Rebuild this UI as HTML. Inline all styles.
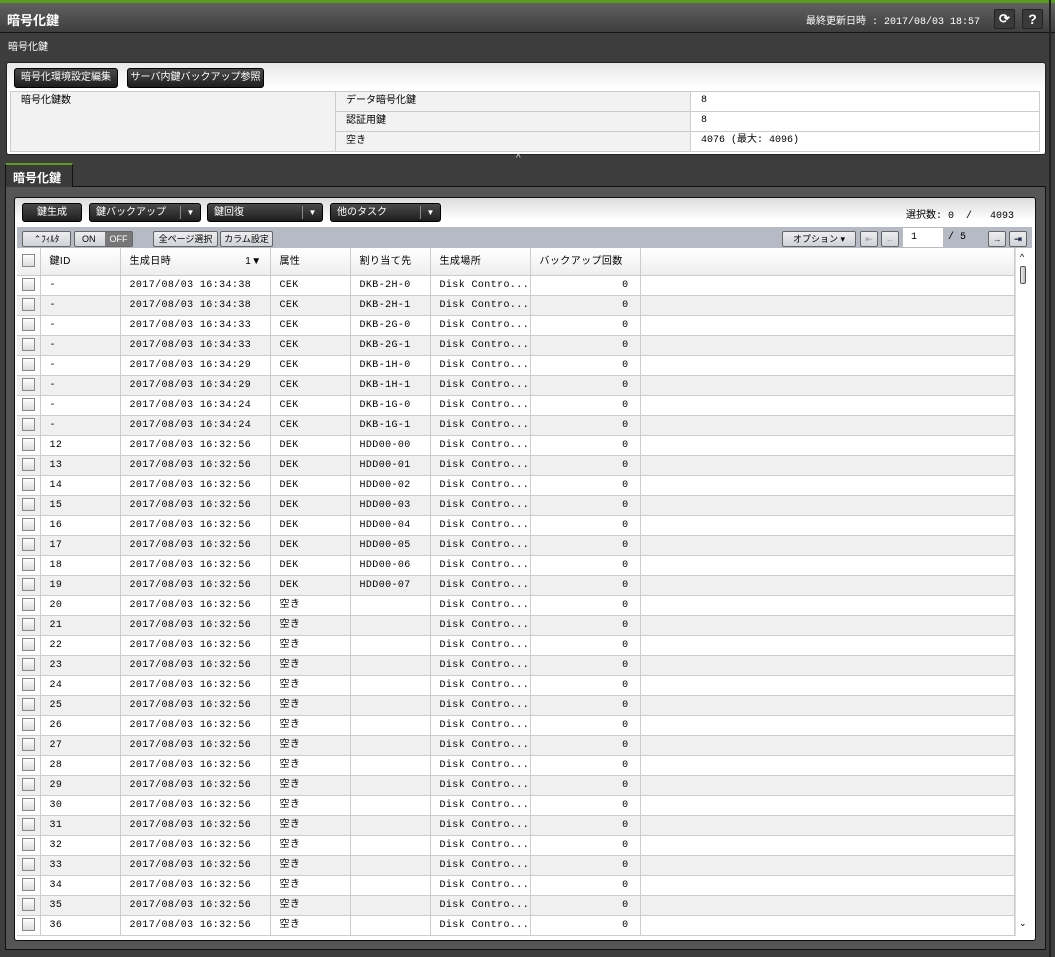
<!DOCTYPE html>
<html><head><meta charset="utf-8"><style>
*{box-sizing:border-box;margin:0;padding:0}
body{width:1055px;height:957px;background:#3d3d3d;font-family:"Liberation Sans","Noto Sans CJK JP",sans-serif;font-size:10px;color:#000;position:relative;overflow:hidden}
.abs{position:absolute}
.top{left:0;top:0;width:1055px;height:33px;background:linear-gradient(#606060,#3e3e3e);border-top:3px solid #5a9a1e;border-bottom:1px solid #151515}
.btn{position:absolute;background:linear-gradient(#4a4a4a,#1e1e1e);color:#fff;border:1px solid #000;border-radius:3px;font-size:10px;text-align:center;line-height:17px}
.dd{position:absolute;background:linear-gradient(#4a4a4a,#1e1e1e);color:#fff;border:1px solid #000;border-radius:3px;font-size:10px;line-height:17px;padding-left:6px}
.dd i{position:absolute;right:0;top:2px;width:20px;height:13px;border-left:1px solid #888;font-style:normal;text-align:center;line-height:13px;font-size:8px}
table{border-collapse:collapse;table-layout:fixed}
.info td{border:1px solid #ccc;height:20px;vertical-align:top;padding:0 10px;line-height:18px;font-size:10px;overflow:hidden}
.g td{font-family:"Liberation Mono","Noto Sans CJK JP",monospace;font-size:10px;letter-spacing:0.4px;height:20px;line-height:19px;border-bottom:1px solid #ccc;border-right:1px solid #ccc;padding:0 0 0 9px;white-space:nowrap;overflow:hidden;vertical-align:middle}
.g tr:nth-child(even) td{background:#f0f0f0}
.g td.n{text-align:right;padding-right:11px}
.cb{display:inline-block;width:13px;height:13px;border:1px solid #888;background:linear-gradient(#fff,#ddd);vertical-align:middle;margin-left:-4px}
.fb{position:absolute;border:1px solid #666;border-radius:2px;background:linear-gradient(#eee,#cfd2d8);font-size:9px;line-height:14px;text-align:center;top:231px;height:16px;white-space:nowrap;overflow:hidden}
</style></head><body>
<div class="abs top"></div>
<div class="abs" style="left:7px;top:10px;color:#fff;font-weight:bold;font-size:13px">暗号化鍵</div>
<div class="abs" style="left:806px;top:12px;color:#fff;font-size:10px;font-family:'Liberation Mono','Noto Sans CJK JP',monospace">最終更新日時 : 2017/08/03 18:57</div>
<div class="abs" style="left:994px;top:9px;width:21px;height:20px;border:1px solid #222;border-radius:2px;background:#3a3a3a;color:#fff;text-align:center;font-weight:bold;font-size:13px;line-height:18px">⟳</div>
<div class="abs" style="left:1022px;top:9px;width:21px;height:20px;border:1px solid #222;border-radius:2px;background:#3a3a3a;color:#fff;text-align:center;font-weight:bold;font-size:14px;line-height:18px">?</div>
<div class="abs" style="left:8px;top:38px;color:#fff;font-size:10px">暗号化鍵</div>

<div class="abs" style="left:6px;top:62px;width:1040px;height:93px;border:1px solid #222;border-radius:3px;background:linear-gradient(#e8e8e8,#fff 25px)"></div>
<div class="btn" style="left:14px;top:68px;width:104px;height:20px">暗号化環境設定編集</div>
<div class="btn" style="left:127px;top:68px;width:137px;height:20px">サーバ内鍵バックアップ参照</div>
<table class="info abs" style="left:10px;top:91px;width:1030px">
<tr><td rowspan="3" style="width:325px;background:#f2f2f2">暗号化鍵数</td><td style="width:355px;background:#f2f2f2">データ暗号化鍵</td><td style="font-family:'Liberation Mono',monospace">8</td></tr>
<tr><td style="background:#f2f2f2">認証用鍵</td><td style="font-family:'Liberation Mono',monospace">8</td></tr>
<tr><td style="background:#f2f2f2">空き</td><td style="font-family:'Liberation Mono','Noto Sans CJK JP',monospace">4076 (最大: 4096)</td></tr>
</table>
<div class="abs" style="left:516px;top:153px;color:#ddd;font-size:10px">^</div>

<div class="abs" style="left:5px;top:163px;width:68px;height:24px;background:#3a3a3a;border:1px solid #111;border-top:2px solid #5a9a1e;border-bottom:none;color:#fff;font-weight:bold;font-size:12px;padding:4px 0 0 7px;z-index:2">暗号化鍵</div>
<div class="abs" style="left:5px;top:186px;width:1041px;height:764px;background:#555;border:1px solid #111"></div>
<div class="abs" style="left:1049px;top:0;width:2px;height:957px;background:#222"></div>
<div class="abs" style="left:14px;top:197px;width:1022px;height:744px;background:linear-gradient(#dcdcdc,#fff 22px);border:1px solid #111;border-radius:3px"></div>

<div class="btn" style="left:22px;top:203px;width:60px;height:19px">鍵生成</div>
<div class="dd" style="left:89px;top:203px;width:112px;height:19px">鍵バックアップ<i>▼</i></div>
<div class="dd" style="left:207px;top:203px;width:116px;height:19px">鍵回復<i>▼</i></div>
<div class="dd" style="left:330px;top:203px;width:111px;height:19px">他のタスク<i>▼</i></div>
<div class="abs" style="left:906px;top:206px;font-size:10px;font-family:'Liberation Mono','Noto Sans CJK JP',monospace;white-space:pre">選択数: 0  /   4093</div>

<div class="abs" style="left:17px;top:227px;width:1015px;height:21px;background:#b6bac4"></div>
<div class="fb" style="left:22px;width:49px">⌃ﾌｨﾙﾀ</div>
<div class="fb" style="left:74px;width:59px;text-align:left;padding-left:7px">ON <span style="position:absolute;right:0;top:0;width:27px;height:14px;background:#777;color:#fff;text-align:center">OFF</span></div>
<div class="fb" style="left:153px;width:65px">全ページ選択</div>
<div class="fb" style="left:220px;width:53px">カラム設定</div>
<div class="fb" style="left:782px;width:74px">オプション ▾</div>
<div class="fb" style="left:860px;width:18px;color:#999">⇤</div>
<div class="fb" style="left:881px;width:18px;color:#999">←</div>
<div class="abs" style="left:903px;top:228px;width:40px;height:19px;background:#fff;font-family:'Liberation Mono',monospace;padding:4px 0 0 8px">1</div>
<div class="abs" style="left:948px;top:232px;font-family:'Liberation Mono',monospace">/ 5</div>
<div class="fb" style="left:988px;width:18px;font-weight:bold;color:#124">→</div>
<div class="fb" style="left:1009px;width:18px;font-weight:bold;color:#124">⇥</div>

<div class="abs" style="left:17px;top:248px;width:1015px;height:688px;background:#fff;overflow:hidden">
<table class="g" style="width:998px">
<tr style="height:27px"><td style="width:23px;height:27px;background:linear-gradient(#fff,#eee)"><span class="cb"></span></td><td style="width:80px;background:linear-gradient(#fff,#eee);font-family:'Liberation Sans','Noto Sans CJK JP',sans-serif">鍵ID</td><td style="width:150px;background:linear-gradient(#fff,#eee);font-family:'Liberation Sans','Noto Sans CJK JP',sans-serif">生成日時<span style="float:right;margin-right:8px">1▼</span></td><td style="width:80px;background:linear-gradient(#fff,#eee);font-family:'Liberation Sans','Noto Sans CJK JP',sans-serif">属性</td><td style="width:80px;background:linear-gradient(#fff,#eee);font-family:'Liberation Sans','Noto Sans CJK JP',sans-serif">割り当て先</td><td style="width:100px;background:linear-gradient(#fff,#eee);font-family:'Liberation Sans','Noto Sans CJK JP',sans-serif">生成場所</td><td style="width:110px;background:linear-gradient(#fff,#eee);font-family:'Liberation Sans','Noto Sans CJK JP',sans-serif">バックアップ回数</td><td style="background:linear-gradient(#fff,#eee)"></td></tr>
</table>
<table class="g" style="width:998px">
<colgroup><col style="width:23px"><col style="width:80px"><col style="width:150px"><col style="width:80px"><col style="width:80px"><col style="width:100px"><col style="width:110px"><col></colgroup>
<tr><td><span class="cb"></span></td><td>-</td><td>2017/08/03 16:34:38</td><td>CEK</td><td>DKB-2H-0</td><td>Disk Contro...</td><td class="n">0</td><td></td></tr>
<tr><td><span class="cb"></span></td><td>-</td><td>2017/08/03 16:34:38</td><td>CEK</td><td>DKB-2H-1</td><td>Disk Contro...</td><td class="n">0</td><td></td></tr>
<tr><td><span class="cb"></span></td><td>-</td><td>2017/08/03 16:34:33</td><td>CEK</td><td>DKB-2G-0</td><td>Disk Contro...</td><td class="n">0</td><td></td></tr>
<tr><td><span class="cb"></span></td><td>-</td><td>2017/08/03 16:34:33</td><td>CEK</td><td>DKB-2G-1</td><td>Disk Contro...</td><td class="n">0</td><td></td></tr>
<tr><td><span class="cb"></span></td><td>-</td><td>2017/08/03 16:34:29</td><td>CEK</td><td>DKB-1H-0</td><td>Disk Contro...</td><td class="n">0</td><td></td></tr>
<tr><td><span class="cb"></span></td><td>-</td><td>2017/08/03 16:34:29</td><td>CEK</td><td>DKB-1H-1</td><td>Disk Contro...</td><td class="n">0</td><td></td></tr>
<tr><td><span class="cb"></span></td><td>-</td><td>2017/08/03 16:34:24</td><td>CEK</td><td>DKB-1G-0</td><td>Disk Contro...</td><td class="n">0</td><td></td></tr>
<tr><td><span class="cb"></span></td><td>-</td><td>2017/08/03 16:34:24</td><td>CEK</td><td>DKB-1G-1</td><td>Disk Contro...</td><td class="n">0</td><td></td></tr>
<tr><td><span class="cb"></span></td><td>12</td><td>2017/08/03 16:32:56</td><td>DEK</td><td>HDD00-00</td><td>Disk Contro...</td><td class="n">0</td><td></td></tr>
<tr><td><span class="cb"></span></td><td>13</td><td>2017/08/03 16:32:56</td><td>DEK</td><td>HDD00-01</td><td>Disk Contro...</td><td class="n">0</td><td></td></tr>
<tr><td><span class="cb"></span></td><td>14</td><td>2017/08/03 16:32:56</td><td>DEK</td><td>HDD00-02</td><td>Disk Contro...</td><td class="n">0</td><td></td></tr>
<tr><td><span class="cb"></span></td><td>15</td><td>2017/08/03 16:32:56</td><td>DEK</td><td>HDD00-03</td><td>Disk Contro...</td><td class="n">0</td><td></td></tr>
<tr><td><span class="cb"></span></td><td>16</td><td>2017/08/03 16:32:56</td><td>DEK</td><td>HDD00-04</td><td>Disk Contro...</td><td class="n">0</td><td></td></tr>
<tr><td><span class="cb"></span></td><td>17</td><td>2017/08/03 16:32:56</td><td>DEK</td><td>HDD00-05</td><td>Disk Contro...</td><td class="n">0</td><td></td></tr>
<tr><td><span class="cb"></span></td><td>18</td><td>2017/08/03 16:32:56</td><td>DEK</td><td>HDD00-06</td><td>Disk Contro...</td><td class="n">0</td><td></td></tr>
<tr><td><span class="cb"></span></td><td>19</td><td>2017/08/03 16:32:56</td><td>DEK</td><td>HDD00-07</td><td>Disk Contro...</td><td class="n">0</td><td></td></tr>
<tr><td><span class="cb"></span></td><td>20</td><td>2017/08/03 16:32:56</td><td>空き</td><td></td><td>Disk Contro...</td><td class="n">0</td><td></td></tr>
<tr><td><span class="cb"></span></td><td>21</td><td>2017/08/03 16:32:56</td><td>空き</td><td></td><td>Disk Contro...</td><td class="n">0</td><td></td></tr>
<tr><td><span class="cb"></span></td><td>22</td><td>2017/08/03 16:32:56</td><td>空き</td><td></td><td>Disk Contro...</td><td class="n">0</td><td></td></tr>
<tr><td><span class="cb"></span></td><td>23</td><td>2017/08/03 16:32:56</td><td>空き</td><td></td><td>Disk Contro...</td><td class="n">0</td><td></td></tr>
<tr><td><span class="cb"></span></td><td>24</td><td>2017/08/03 16:32:56</td><td>空き</td><td></td><td>Disk Contro...</td><td class="n">0</td><td></td></tr>
<tr><td><span class="cb"></span></td><td>25</td><td>2017/08/03 16:32:56</td><td>空き</td><td></td><td>Disk Contro...</td><td class="n">0</td><td></td></tr>
<tr><td><span class="cb"></span></td><td>26</td><td>2017/08/03 16:32:56</td><td>空き</td><td></td><td>Disk Contro...</td><td class="n">0</td><td></td></tr>
<tr><td><span class="cb"></span></td><td>27</td><td>2017/08/03 16:32:56</td><td>空き</td><td></td><td>Disk Contro...</td><td class="n">0</td><td></td></tr>
<tr><td><span class="cb"></span></td><td>28</td><td>2017/08/03 16:32:56</td><td>空き</td><td></td><td>Disk Contro...</td><td class="n">0</td><td></td></tr>
<tr><td><span class="cb"></span></td><td>29</td><td>2017/08/03 16:32:56</td><td>空き</td><td></td><td>Disk Contro...</td><td class="n">0</td><td></td></tr>
<tr><td><span class="cb"></span></td><td>30</td><td>2017/08/03 16:32:56</td><td>空き</td><td></td><td>Disk Contro...</td><td class="n">0</td><td></td></tr>
<tr><td><span class="cb"></span></td><td>31</td><td>2017/08/03 16:32:56</td><td>空き</td><td></td><td>Disk Contro...</td><td class="n">0</td><td></td></tr>
<tr><td><span class="cb"></span></td><td>32</td><td>2017/08/03 16:32:56</td><td>空き</td><td></td><td>Disk Contro...</td><td class="n">0</td><td></td></tr>
<tr><td><span class="cb"></span></td><td>33</td><td>2017/08/03 16:32:56</td><td>空き</td><td></td><td>Disk Contro...</td><td class="n">0</td><td></td></tr>
<tr><td><span class="cb"></span></td><td>34</td><td>2017/08/03 16:32:56</td><td>空き</td><td></td><td>Disk Contro...</td><td class="n">0</td><td></td></tr>
<tr><td><span class="cb"></span></td><td>35</td><td>2017/08/03 16:32:56</td><td>空き</td><td></td><td>Disk Contro...</td><td class="n">0</td><td></td></tr>
<tr><td><span class="cb"></span></td><td>36</td><td>2017/08/03 16:32:56</td><td>空き</td><td></td><td>Disk Contro...</td><td class="n">0</td><td></td></tr>
</table>
<div class="abs" style="left:998px;top:0;width:17px;height:688px;background:#fff;border-left:1px solid #ddd"></div>
<div class="abs" style="left:1003px;top:4px;font-size:9px">^</div>
<div class="abs" style="left:1003px;top:18px;width:6px;height:18px;border:1px solid #555;border-radius:2px;background:linear-gradient(90deg,#eee,#bbb)"></div>
<div class="abs" style="left:1002px;top:670px;font-size:9px">⌄</div>
</div>
</body></html>
